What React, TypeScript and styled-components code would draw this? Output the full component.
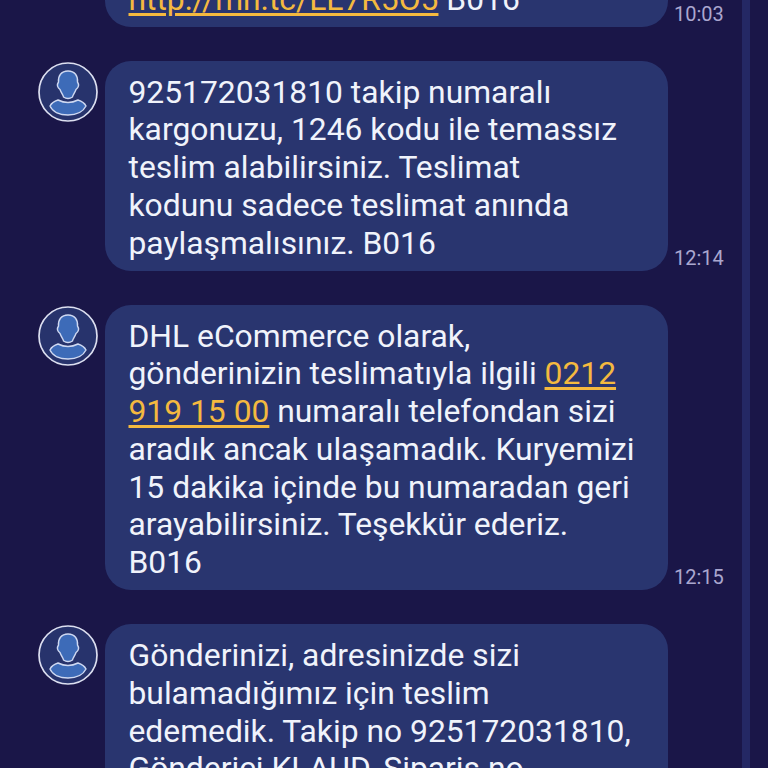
import styled, { createGlobalStyle } from 'styled-components';

const GlobalStyle = createGlobalStyle`
    html, body {
        margin: 0;
        padding: 0;
        background-color: #1a1648;
    }
`;

const Screen = styled.div`
    display: flex;
    width: 768px;
    height: 768px;
    overflow: hidden;
    background-color: #1a1648;
    font-family: 'Roboto', sans-serif;
`;

const MessageList = styled.div`
    display: flex;
    flex-direction: column;
    gap: 34px;
    width: 742px;
    margin-top: -32.2px;
    padding-left: 38px;
    box-sizing: border-box;
`;

const Row = styled.div`
    display: grid;
    grid-template-columns: 60px 563px auto;
    column-gap: 7px;
    align-items: start;
`;

const AvatarWrap = styled.div`
    grid-column: 1;
    width: 60px;
    height: 60px;
    margin-top: 1px;
`;

const Bubble = styled.div`
    grid-column: 2;
    padding: 12.7px 24px 8.8px 23.5px;
    border-radius: 26px;
    background-color: #29356f;
    color: #f0f3fb;
    font-size: 31.8px;
    line-height: 37.7px;
    white-space: nowrap;
`;

const Link = styled.span`
    color: #f4b93f;
    text-decoration: underline;
    text-underline-offset: 3px;
`;

const Time = styled.div`
    grid-column: 3;
    align-self: end;
    margin-bottom: 3.5px;
    margin-left: -1px;
    color: #aaa7cf;
    font-size: 20px;
    line-height: 20px;
`;

const ScrollTrack = styled.div`
    flex: none;
    width: 8px;
    height: 100%;
    background-color: #242864;
`;

const Avatar = () => (
    <AvatarWrap>
        <svg width="60" height="60" viewBox="0 0 60 60">
            <circle cx="30" cy="30" r="29" fill="#27336c" stroke="#dcdff0" strokeWidth="1.7" />
            <path
                d="M30 9 C23 9 20 14 20.500 20 C18.500 23 19.500 25.500 22 27.500 C23.500 31.500 25.500 33.500 25.500 35 C27 36 28.500 36.500 30 36.500 C31.500 36.500 33 36 34.500 35 C34.500 33.500 36.500 31.500 38 27.500 C40.500 25.500 41.500 23 39.500 20 C40 14 37 9 30 9 Z"
                fill="#3d6bb8"
                stroke="#cfd9f2"
                strokeWidth="1.4"
            />
            <path
                d="M20 38 C23 39.500 26 40.500 30 40.500 C34 40.500 37 39.500 40 38 C43 39 46.500 41 48 44 C45 50 38 53 30 53 C22 53 14.500 50 12 44 C13.500 41 17 39 20 38 Z"
                fill="#3d6bb8"
                stroke="#cfd9f2"
                strokeWidth="1.4"
            />
        </svg>
    </AvatarWrap>
);

const App = () => {
    return (
        <Screen>
            <GlobalStyle />
            <MessageList>
                <Row>
                    <Bubble>
                        <Link>http://mn.tc/LL7R5O5</Link> B016
                    </Bubble>
                    <Time>10:03</Time>
                </Row>
                <Row>
                    <Avatar />
                    <Bubble>
                        925172031810 takip numaralı<br />
                        kargonuzu, 1246 kodu ile temassız<br />
                        teslim alabilirsiniz. Teslimat<br />
                        kodunu sadece teslimat anında<br />
                        paylaşmalısınız. B016
                    </Bubble>
                    <Time>12:14</Time>
                </Row>
                <Row>
                    <Avatar />
                    <Bubble>
                        DHL eCommerce olarak,<br />
                        gönderinizin teslimatıyla ilgili <Link>0212</Link><br />
                        <Link>919 15 00</Link> numaralı telefondan sizi<br />
                        aradık ancak ulaşamadık. Kuryemizi<br />
                        15 dakika içinde bu numaradan geri<br />
                        arayabilirsiniz. Teşekkür ederiz.<br />
                        B016
                    </Bubble>
                    <Time>12:15</Time>
                </Row>
                <Row>
                    <Avatar />
                    <Bubble>
                        Gönderinizi, adresinizde sizi<br />
                        bulamadığımız için teslim<br />
                        edemedik. Takip no 925172031810,<br />
                        Gönderici KLAUD, Sipariş no
                    </Bubble>
                </Row>
            </MessageList>
            <ScrollTrack />
        </Screen>
    );
};

export default App;
